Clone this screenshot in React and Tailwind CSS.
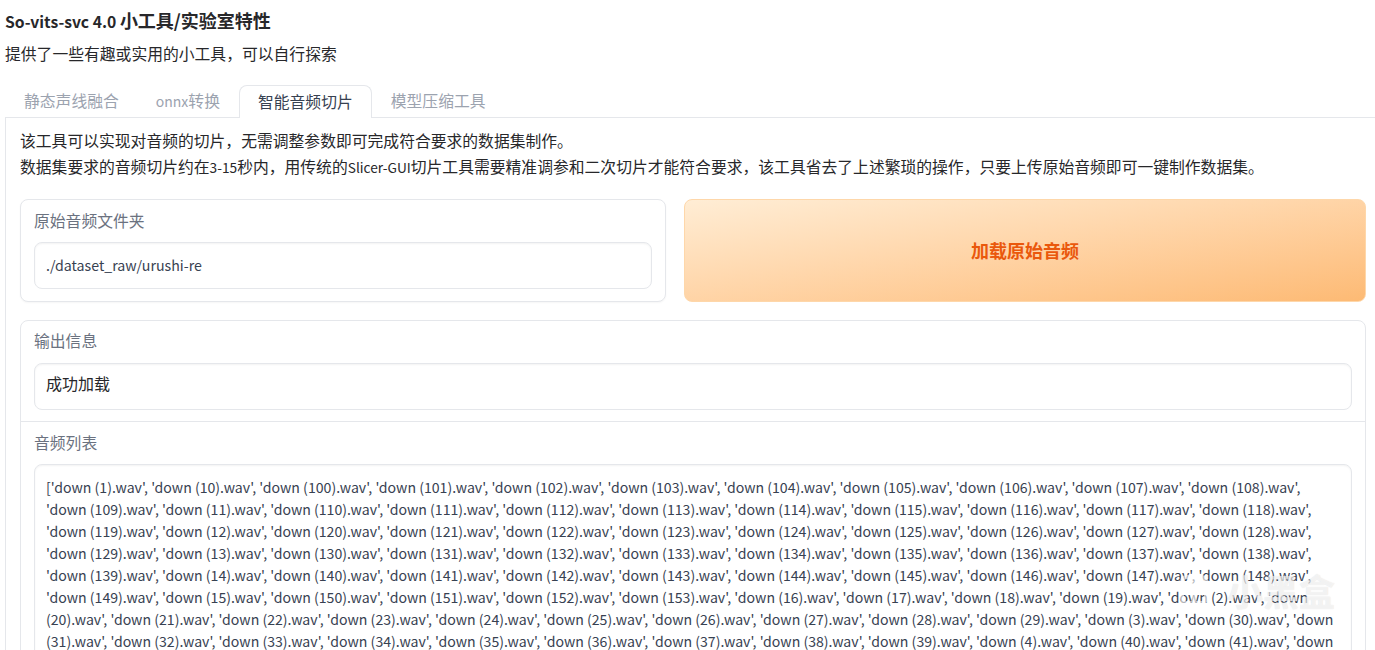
const F = { fontFamily: '"Noto Sans CJK SC", "Noto Sans", sans-serif' };

const lines = [
  "['down (1).wav', 'down (10).wav', 'down (100).wav', 'down (101).wav', 'down (102).wav', 'down (103).wav', 'down (104).wav', 'down (105).wav', 'down (106).wav', 'down (107).wav', 'down (108).wav',",
  "'down (109).wav', 'down (11).wav', 'down (110).wav', 'down (111).wav', 'down (112).wav', 'down (113).wav', 'down (114).wav', 'down (115).wav', 'down (116).wav', 'down (117).wav', 'down (118).wav',",
  "'down (119).wav', 'down (12).wav', 'down (120).wav', 'down (121).wav', 'down (122).wav', 'down (123).wav', 'down (124).wav', 'down (125).wav', 'down (126).wav', 'down (127).wav', 'down (128).wav',",
  "'down (129).wav', 'down (13).wav', 'down (130).wav', 'down (131).wav', 'down (132).wav', 'down (133).wav', 'down (134).wav', 'down (135).wav', 'down (136).wav', 'down (137).wav', 'down (138).wav',",
  "'down (139).wav', 'down (14).wav', 'down (140).wav', 'down (141).wav', 'down (142).wav', 'down (143).wav', 'down (144).wav', 'down (145).wav', 'down (146).wav', 'down (147).wav', 'down (148).wav',",
  "'down (149).wav', 'down (15).wav', 'down (150).wav', 'down (151).wav', 'down (152).wav', 'down (153).wav', 'down (16).wav', 'down (17).wav', 'down (18).wav', 'down (19).wav', 'down (2).wav', 'down",
  "(20).wav', 'down (21).wav', 'down (22).wav', 'down (23).wav', 'down (24).wav', 'down (25).wav', 'down (26).wav', 'down (27).wav', 'down (28).wav', 'down (29).wav', 'down (3).wav', 'down (30).wav', 'down",
  "(31).wav', 'down (32).wav', 'down (33).wav', 'down (34).wav', 'down (35).wav', 'down (36).wav', 'down (37).wav', 'down (38).wav', 'down (39).wav', 'down (4).wav', 'down (40).wav', 'down (41).wav', 'down",
];

function Tab({ children, active }) {
  return (
    <div
      className={
        active
          ? "h-[33px] px-[18px] flex items-center text-[15.8px] text-[#374151] bg-white border border-[#e5e7eb] border-b-0 rounded-t-[8px] -mb-px relative z-10"
          : "h-[32px] px-[19px] flex items-center text-[15.8px] text-[#9ca3af]"
      }
    >
      {children}
    </div>
  );
}

export default function App() {
  return (
    <div className="relative h-[650px] w-[1375px] overflow-hidden bg-white pl-[5px] text-[#374151]" style={F}>
      <h3 className="pt-[8px] text-[18px] leading-[24px] font-bold text-[#27272a]">
        <span className="text-[15.7px] font-semibold">So-vits-svc 4.0 </span>小工具/实验室特性
      </h3>
      <p className="mt-[8px] text-[15.8px] leading-[24px] text-[#27272a]">提供了一些有趣或实用的小工具，可以自行探索</p>

      <div className="mt-[19px] flex h-[33px] items-end border-b border-[#e5e7eb]">
        <Tab>静态声线融合</Tab>
        <div className="-ml-[1px]"><Tab><span className="text-[14px]">onnx</span>转换</Tab></div>
        <Tab active>智能音频切片</Tab>
        <Tab>模型压缩工具</Tab>
      </div>

      <div className="h-[600px] border-l border-[#e5e7eb] pl-[14px]">
        <div className="pt-[10px] text-[15.8px] leading-[26px] text-[#27272a]">
          <p>该工具可以实现对音频的切片，无需调整参数即可完成符合要求的数据集制作。</p>
          <p>
            数据集要求的音频切片约在<span className="text-[13.7px]">3-15</span>秒内，用传统的<span className="text-[13.7px]">Slicer-GUI</span>切片工具需要精准调参和二次切片才能符合要求，该工具省去了上述繁琐的操作，只要上传原始音频即可一键制作数据集。
          </p>
        </div>

        <div className="mt-[19px] flex w-[1346px] gap-[18px]">
          <div className="h-[103px] w-[646px] shrink-0 rounded-[8px] border border-[#e5e7eb] bg-white px-[13px] shadow-[0_1px_2px_rgba(0,0,0,0.04)]">
            <div className="pt-[9px] text-[15.8px] leading-[24px] text-[#6b7280]">原始音频文件夹</div>
            <div className="mt-[9px] flex h-[47px] items-center rounded-[8px] border border-[#e5e7eb] px-[11px] text-[14.2px] shadow-[inset_0_1px_2px_rgba(0,0,0,0.05)]">
              ./dataset_raw/urushi-re
            </div>
          </div>
          <button className="flex h-[103px] w-[682px] shrink-0 items-center justify-center rounded-[8px] border border-[#fed7aa] bg-gradient-to-br from-[#ffedd5] to-[#fdba74] text-[18px] font-bold text-[#ea580c]">
            加载原始音频
          </button>
        </div>

        <div className="mt-[18px] h-[400px] w-[1346px] rounded-[8px] border border-[#e5e7eb] bg-white">
          <div className="h-[101px] border-b border-[#e5e7eb] px-[13px]">
            <div className="pt-[8px] text-[15.8px] leading-[24px] text-[#6b7280]">输出信息</div>
            <div className="mt-[10px] flex h-[47px] items-center rounded-[8px] border border-[#e5e7eb] px-[11px] pb-[7px] text-[16px] text-[#27272a] shadow-[inset_0_1px_2px_rgba(0,0,0,0.05)]">
              成功加载
            </div>
          </div>
          <div className="px-[13px]">
            <div className="pt-[9px] text-[15.8px] leading-[24px] text-[#6b7280]">音频列表</div>
            <div className="mt-[9px] h-[300px] overflow-hidden rounded-[8px] border border-[#e5e7eb] px-[11px] pt-[11px] text-[14.12px] leading-[22.05px] shadow-[inset_0_1px_2px_rgba(0,0,0,0.05)]">
              {lines.map((l) => (
                <div key={l} className="whitespace-nowrap">{l}</div>
              ))}
            </div>
          </div>
        </div>
      </div>

      <svg className="absolute left-[1178px] top-[574px] opacity-60" width="32" height="36" viewBox="0 0 32 36" fill="none" stroke="#ffffff" strokeWidth="4">
        <path d="M4 8 Q4 3 9 3 H23 Q28 3 28 8 V24 Q28 29 23 29 H9 Q4 29 4 24 Z" />
        <path d="M16 3 V34" />
      </svg>
      <div className="absolute left-[1227px] top-[568px] text-[36px] font-bold leading-[44px] text-white/65 [text-shadow:0_0_1px_rgba(0,0,0,0.15)]">小黑盒</div>
    </div>
  );
}
